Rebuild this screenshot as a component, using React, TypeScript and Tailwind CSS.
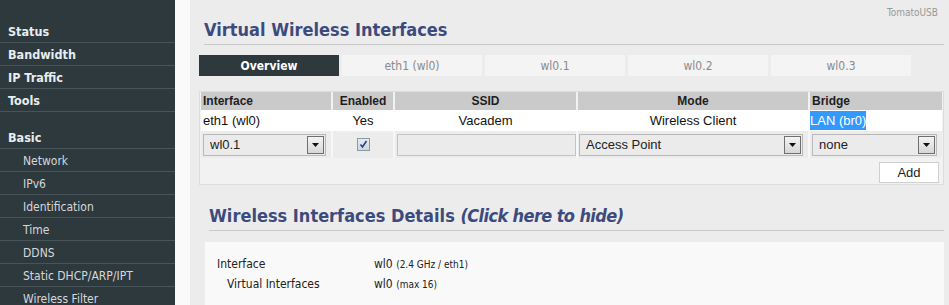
import React from "react";

const tahoma = { fontFamily: '"DejaVu Sans Condensed", "DejaVu Sans", sans-serif' };

function SelectBox({ label, className }: { label: string; className: string }) {
  return (
    <div className={`flex h-[22px] items-center border border-[#b9b9b9] bg-[#ebebeb] ${className}`}>
      <span className="flex-1 pl-[6px] text-[13px] text-[#222]">{label}</span>
      <span className="mr-[1px] flex h-[18px] w-[17px] items-center justify-center border border-[#6f6f6f] bg-gradient-to-b from-[#f4f4f4] to-[#d6d6d6]">
        <svg width="7" height="4" viewBox="0 0 7 4"><path d="M0 0h7L3.5 4z" fill="#111" /></svg>
      </span>
    </div>
  );
}

export default function App() {
  const side1 = ["Status", "Bandwidth", "IP Traffic", "Tools"];
  const side2 = ["Network", "IPv6", "Identification", "Time", "DDNS", "Static DHCP/ARP/IPT", "Wireless Filter"];
  const tabs = ["eth1 (wl0)", "wl0.1", "wl0.2", "wl0.3"];
  return (
    <div className="flex h-[305px] w-[949px] overflow-hidden bg-[#ececec]" style={{ fontFamily: '"Liberation Sans", Arial, sans-serif' }}>
      {/* sidebar */}
      <div className="w-[175px] shrink-0 bg-[#2e393e] pt-[20px]" style={tahoma}>
        {side1.map((s) => (
          <div key={s} className="flex h-[23px] items-center border-b border-[#47545a] pl-[8px] pt-[2px] text-[12.5px] font-bold text-[#e8edf0]">{s}</div>
        ))}
        <div className="mt-[14px] flex h-[23px] items-center border-b border-[#47545a] pl-[8px] pt-[2px] text-[12.5px] font-bold text-[#e8edf0]">Basic</div>
        {side2.map((s) => (
          <div key={s} className="flex h-[23px] items-center border-b border-[#47545a] pl-[23px] pt-[2px] text-[12px] text-[#d4d8da]">{s}</div>
        ))}
      </div>
      <div className="w-[15px] shrink-0 bg-[#fafafa]" />
      {/* content */}
      <div className="relative flex-1 pl-[9px] pr-[5px]">
        <div className="absolute right-[11px] top-[5px] text-[10px] text-[#999]" style={tahoma}>TomatoUSB</div>
        <div className="ml-[5px] mt-[19px] border-b border-[#c9c9c9] pb-[3px] text-[18px] font-bold leading-[22px] text-[#3d4b7c]" style={tahoma}>
          Virtual Wireless Interfaces
        </div>
        <div className="mt-[10px] flex gap-[3px]" style={tahoma}>
          <div className="flex h-[21px] w-[140px] items-center justify-center bg-[#2e393e] text-[12px] font-bold text-white">Overview</div>
          {tabs.map((t) => (
            <div key={t} className="flex h-[21px] w-[140px] items-center justify-center bg-[#f4f4f4] text-[12px] text-[#8a8a8a]">{t}</div>
          ))}
        </div>
        {/* table box */}
        <div className="mt-[15px] h-[94px] border border-[#dcdcdc] bg-[#f2f2f2] px-[1px]">
          <div className="flex h-[18px] bg-[#cacaca] text-[12px] font-bold text-[#1e1e1e]">
            <div className="flex w-[130px] items-center pl-[2px]">Interface</div>
            <div className="flex w-[62px] items-center justify-center border-l-2 border-[#f2f2f2]">Enabled</div>
            <div className="flex w-[183px] items-center justify-center border-l-2 border-[#f2f2f2]">SSID</div>
            <div className="flex w-[232px] items-center justify-center border-l-2 border-[#f2f2f2]">Mode</div>
            <div className="flex flex-1 items-center border-l-2 border-[#f2f2f2] pl-[2px]">Bridge</div>
          </div>
          <div className="flex h-[21px] bg-white text-[13px] text-[#111]">
            <div className="flex w-[130px] items-center pl-[2px]">eth1 (wl0)</div>
            <div className="flex w-[62px] items-center justify-center pl-[2px]">Yes</div>
            <div className="flex w-[183px] items-center justify-center pl-[2px]">Vacadem</div>
            <div className="flex w-[232px] items-center justify-center pl-[2px]">Wireless Client</div>
            <div className="flex flex-1 items-center pl-[2px]"><span className="bg-[#3399ff] text-white">LAN (br0)</span></div>
          </div>
          <div className="flex h-[27px] bg-[#f2f2f2]">
            <div className="flex w-[130px] items-center bg-[#ececec] pl-[2px]">
              <SelectBox label="wl0.1" className="w-[123px]" />
            </div>
            <div className="flex w-[62px] items-center justify-center border-l-2 border-[#f7f7f7] bg-[#ececec]">
              <span className="flex h-[13px] w-[13px] items-center justify-center border border-[#8b9aa7] bg-gradient-to-b from-[#e6ebf0] to-[#cdd6de]">
                <svg width="9" height="9" viewBox="0 0 9 9"><path d="M1.5 4.5 L3.5 7 L7.5 1" stroke="#28408c" strokeWidth="1.6" fill="none" /></svg>
              </span>
            </div>
            <div className="flex w-[183px] items-center border-l-2 border-[#f7f7f7] bg-[#ececec] pl-[2px]">
              <div className="h-[22px] w-[179px] border border-[#c3c3c3] bg-[#ebebeb]" />
            </div>
            <div className="flex w-[232px] items-center border-l-2 border-[#f7f7f7] bg-[#ececec] pl-[1px]">
              <SelectBox label="Access Point" className="w-[224px]" />
            </div>
            <div className="flex flex-1 items-center border-l-2 border-[#f7f7f7] bg-[#ececec] pl-[2px]">
              <SelectBox label="none" className="w-[125px]" />
            </div>
          </div>
          <div className="flex justify-end pr-[3px] pt-[4px]">
            <div className="flex h-[21px] w-[60px] items-center justify-center border border-[#cfcfcf] bg-white text-[13px] text-[#222]">Add</div>
          </div>
        </div>
        {/* details heading */}
        <div className="ml-[10px] mt-[20px] border-b border-[#c9c9c9] pb-[3px] text-[18px] font-bold leading-[22px] text-[#3d4b7c]" style={tahoma}>
          Wireless Interfaces Details <i className="tracking-[-0.6px]">(Click here to hide)</i>
        </div>
        <div className="ml-[6px] mt-[11px] h-[70px] bg-[#f9f9f9] pt-[12px] text-[12px] text-[#222]" style={tahoma}>
          <div className="flex h-[20px] items-center">
            <div className="w-[169px] pl-[12px]">Interface</div>
            <div>wl0 <span className="text-[10px]">(2.4 GHz / eth1)</span></div>
          </div>
          <div className="flex h-[20px] items-center">
            <div className="w-[169px] pl-[22px]">Virtual Interfaces</div>
            <div>wl0 <span className="text-[10px]">(max 16)</span></div>
          </div>
        </div>
      </div>
    </div>
  );
}
